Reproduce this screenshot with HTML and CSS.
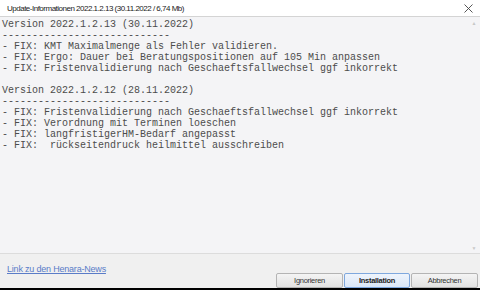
FILE: index.html
```html
<!DOCTYPE html>
<html>
  <head>
    <title>Update-Informationen</title>
    <link rel="stylesheet" href="styles.css">
  </head>
  <body>
    <div id="window">
      <div id="titlebar">
        <span id="title">Update-Informationen 2022.1.2.13 (30.11.2022 / 6,74 Mb)</span>
        <span id="closeBtn">
          <svg width="9" height="9" viewBox="0 0 9 9">
            <path d="M0.5 0.5 L8.5 8.5 M8.5 0.5 L0.5 8.5" stroke="#444" stroke-width="0.9" />
          </svg>
        </span>
      </div>
      <div id="notes">
        <pre id="noteText">Version 2022.1.2.13 (30.11.2022)
----------------------------
- FIX: KMT Maximalmenge als Fehler validieren.
- FIX: Ergo: Dauer bei Beratungspositionen auf 105 Min anpassen
- FIX: Fristenvalidierung nach Geschaeftsfallwechsel ggf inkorrekt

Version 2022.1.2.12 (28.11.2022)
----------------------------
- FIX: Fristenvalidierung nach Geschaeftsfallwechsel ggf inkorrekt
- FIX: Verordnung mit Terminen loeschen
- FIX: langfristigerHM-Bedarf angepasst
- FIX:  rückseitendruck heilmittel ausschreiben</pre>
        <div id="scrollbar">
          <span class="arrow">&#9650;</span>
          <span class="arrow">&#9660;</span>
        </div>
      </div>
      <div id="footer">
        <div id="linkRow">
          <a href="#" id="newsLink">Link zu den Henara-News</a>
        </div>
        <div id="buttons">
          <button class="btn">Ignorieren</button>
          <button class="btn primary">Installation</button>
          <button class="btn">Abbrechen</button>
        </div>
      </div>
    </div>
    <div id="bottomEdge"></div>
  </body>
</html>
```

FILE: styles.css
```css
body {
  margin: 0;
  width: 480px;
  height: 290px;
  overflow: hidden;
  font-family: "Liberation Sans", Arial, sans-serif;
  background: #000;
}

#window {
  height: 288px;
  display: flex;
  flex-direction: column;
  background: #f0f0f0;
}

#titlebar {
  height: 16px;
  background: #fff;
  display: flex;
  align-items: center;
  justify-content: space-between;
  padding: 0 6px 0 7px;
  border-bottom: 1px solid #d4d4d4;
}

#title {
  font-size: 8px;
  letter-spacing: -0.5px;
  color: #222;
}

#closeBtn {
  display: flex;
  margin-right: 1px;
}

#notes {
  height: 236px;
  display: flex;
  background: #f4f4f6;
  border-bottom: 1px solid #dcdcdc;
}

#noteText {
  flex: 1;
  margin: 0;
  padding: 2px 0 0 2px;
  font-family: "Liberation Mono", "Courier New", monospace;
  font-size: 10px;
  line-height: 11px;
  color: #4c4c4c;
}

#scrollbar {
  width: 12px;
  display: flex;
  flex-direction: column;
  justify-content: space-between;
  align-items: center;
  padding: 3px 0 2px;
}

.arrow {
  font-size: 5px;
  color: #c8c8c8;
}

#footer {
  flex: 1;
  display: flex;
  flex-direction: column;
}

#linkRow {
  padding: 4px 7px 0;
  height: 15px;
}

#newsLink {
  font-size: 9px;
  letter-spacing: -0.2px;
  color: #5a7cc8;
  text-decoration: underline;
}

#buttons {
  display: flex;
  justify-content: flex-end;
  gap: 1px;
  padding: 0 2px 0 0;
  margin-top: auto;
}

.btn {
  width: 67px;
  height: 15px;
  padding: 0;
  font-family: "Liberation Sans", Arial, sans-serif;
  font-size: 7.5px;
  letter-spacing: -0.3px;
  color: #333;
  border: 1px solid #b4b4b4;
  border-radius: 2px;
  background: linear-gradient(#f4f4f4, #e2e2e2);
}

.primary {
  width: 66px;
  font-weight: bold;
  color: #222;
  border-color: #7fa8de;
  background: linear-gradient(#eef4fc, #dbe7f8);
}

#bottomEdge {
  height: 2px;
  background: #000;
}
```
